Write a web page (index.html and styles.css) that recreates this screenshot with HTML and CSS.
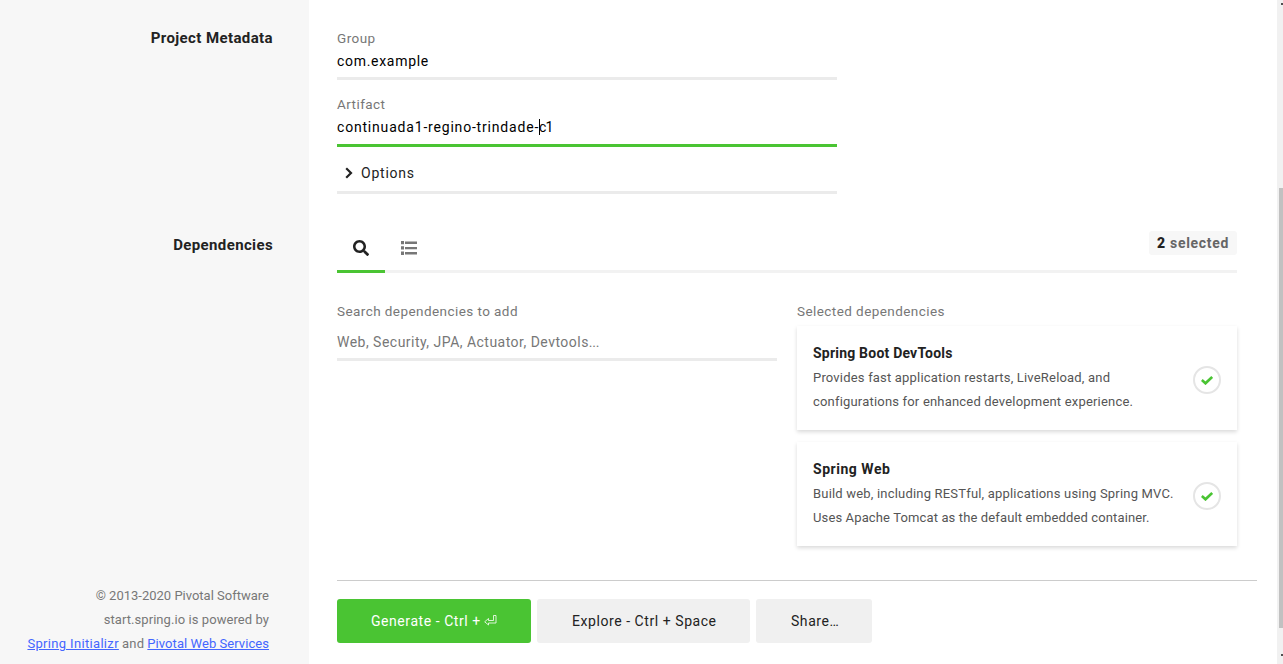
FILE: index.html
```html
<!DOCTYPE html>
<html lang="en">
<head>
<meta charset="utf-8">
<title>Spring Initializr</title>
<link rel="stylesheet" href="styles.css">
</head>
<body>
<div class="app">
  <aside class="sidebar">
    <h2 class="side-label side-meta"><span>Project Metadata</span></h2>
    <h2 class="side-label side-deps"><span>Dependencies</span></h2>
    <footer class="credits">
      <div><span class="credit-copy">© 2013-2020 Pivotal Software</span></div>
      <div><span class="credit-powered">start.spring.io is powered by</span></div>
      <div class="credit-links"><a class="link-init">Spring Initializr</a><span class="credit-and">and</span><a class="link-pws">Pivotal Web Services</a></div>
    </footer>
  </aside>
  <main class="main">
    <section class="metadata">
      <div class="field field-group">
        <span class="label label-group">Group</span>
        <div class="value value-group">com.example</div>
      </div>
      <div class="field field-artifact">
        <span class="label label-artifact">Artifact</span>
        <div class="value"><span class="value-artifact">continuada1-regino-trindade-</span><i class="caret"></i><span class="value-tail">c1</span></div>
      </div>
      <div class="options">
        <svg class="chevron" width="8" height="12" viewBox="0 0 8 12"><path d="M1.2 1.2 6 6 1.2 10.8" fill="none" stroke="currentColor" stroke-width="2.2"/></svg>
        <span>Options</span>
      </div>
    </section>
    <section class="dependencies">
      <nav class="tabs">
        <a class="tab active"><svg width="16" height="16" viewBox="0 0 512 512"><path fill="currentColor" d="M505 442.700 405.300 343c-4.500-4.500-10.600-7-17-7H372c27.600-35.300 44-79.700 44-128C416 93.100 322.900 0 208 0S0 93.100 0 208s93.100 208 208 208c48.300 0 92.700-16.400 128-44v16.300c0 6.400 2.500 12.500 7 17l99.700 99.700c9.400 9.400 24.600 9.400 33.900 0l28.300-28.300c9.400-9.400 9.400-24.600.1-34zM208 336c-70.700 0-128-57.200-128-128 0-70.700 57.200-128 128-128 70.700 0 128 57.200 128 128 0 70.700-57.200 128-128 128z"/></svg></a>
        <a class="tab"><svg width="16" height="14" viewBox="0 0 16 14"><path fill="currentColor" d="M0 0h3v3.300H0zM0 5.300h3v3.300H0zM0 10.600h3v3.300H0zM4 .6h12v2.300H4zM4 5.900h12v2.300H4zM4 11.100h12v2.300H4z"/></svg></a>
        <span class="badge"><strong>2</strong> selected</span>
      </nav>
      <div class="columns">
        <div class="search">
          <span class="label label-search">Search dependencies to add</span>
          <div class="placeholder"><span>Web, Security, JPA, Actuator, Devtools<span class="dots">...</span></span></div>
        </div>
        <div class="selected">
          <span class="label label-selected">Selected dependencies</span>
          <article class="card">
            <div class="card-text">
              <h3 class="t-dev">Spring Boot DevTools</h3>
              <p><span class="d1">Provides fast application restarts, LiveReload, and</span><br><span class="d2">configurations for enhanced development experience.</span></p>
            </div>
            <span class="check"><svg width="12" height="9" viewBox="0 0 12 9"><path d="M.8 4 4.500 7.300 11.200 1" fill="none" stroke="currentColor" stroke-width="2.700"/></svg></span>
          </article>
          <article class="card">
            <div class="card-text">
              <h3 class="t-web">Spring Web</h3>
              <p><span class="d3">Build web, including RESTful, applications using Spring MVC.</span><br><span class="d4">Uses Apache Tomcat as the default embedded container.</span></p>
            </div>
            <span class="check"><svg width="12" height="9" viewBox="0 0 12 9"><path d="M.8 4 4.500 7.300 11.200 1" fill="none" stroke="currentColor" stroke-width="2.700"/></svg></span>
          </article>
        </div>
      </div>
    </section>
    <div class="actions">
      <button class="btn primary"><span>Generate - Ctrl + </span><svg class="enter" width="13" height="11" viewBox="0 0 13 11"><path d="M9.500.5h2.500v7.500H4.500v2L.7 6.800l3.800-3.300v2h5z" fill="none" stroke="currentColor" stroke-width=".8"/></svg></button>
      <button class="btn explore"><span>Explore - Ctrl + Space</span></button>
      <button class="btn share"><span>Share<span class="dots">...</span></span></button>
    </div>
  </main>
  <div class="scrollbar"><i class="arrow"></i><i class="thumb"></i><i class="arrow"></i></div>
</div>
</body>
</html>
```
FILE: styles.css
```css
* { box-sizing: border-box; }
body { margin: 0; font-family: Roboto, "Liberation Sans", sans-serif; font-size: 14px; line-height: 24px; color: #222; background: #fff; }
h2, h3, p { margin: 0; }
.app { display: flex; height: 664px; overflow: hidden; white-space: nowrap; }

.sidebar { width: 309px; background: #f7f7f7; padding: 26px 36px 8px 0; display: flex; flex-direction: column; text-align: right; }
.side-label { font-size: 15px; font-weight: 700; line-height: 24px; letter-spacing: .4px; }
.side-deps { margin-top: 183px; letter-spacing: .37px; }
.credits { margin-top: auto; padding-right: 4px; font-size: 13px; color: #777; }
.credit-powered { letter-spacing: .07px; }
.credit-links { display: flex; justify-content: flex-end; gap: 3px; }
.credits a { color: #4466ff; text-decoration: underline; }
.credits .link-init { letter-spacing: .33px; }
.credit-and { letter-spacing: .3px; }
.credits .link-pws { letter-spacing: .06px; }

.main { flex: 1; padding: 26px 0 0 28px; }
.metadata { width: 500px; }
.label { display: block; font-size: 13.5px; color: #777; line-height: 24px; letter-spacing: .43px; }
.value { display: flex; align-items: center; height: 22px; color: #000; letter-spacing: .7px; }
.value-artifact { letter-spacing: .81px; }
.value-tail { letter-spacing: -.8px; margin-left: -1px; }
.field-group { height: 54px; border-bottom: 3px solid #ebebeb; }
.field-artifact { height: 55px; margin-top: 12px; border-bottom: 3px solid #4ac433; }
.caret { width: 1px; height: 16px; background: #000; }
.options { display: flex; align-items: center; height: 47px; padding: 7px 0 0 8px; gap: 8px; border-bottom: 3px solid #ebebeb; letter-spacing: .78px; }

.dependencies { margin-top: 29px; width: 900px; }
.tabs { display: flex; height: 50px; border-bottom: 3px solid #f2f2f2; }
.tab { width: 48px; height: 50px; display: flex; align-items: center; justify-content: center; color: #777; border-bottom: 3px solid transparent; padding-top: 3px; }
.tab.active { color: #222; border-color: #4ac433; }
.badge { margin: 8px 0 0 auto; width: 88px; height: 24px; border-radius: 3px; background: #f7f7f7; padding-left: 8px; font-weight: 700; color: #666; letter-spacing: .7px; }
.badge strong { color: #222; }
.columns { display: flex; gap: 20px; padding-top: 26px; }
.search, .selected { width: 440px; }
.placeholder { height: 38px; padding-top: 7px; border-bottom: 3px solid #ebebeb; color: #777; letter-spacing: .48px; }
.placeholder .dots { letter-spacing: -.3px; }
.selected { display: flex; flex-direction: column; }
.card { display: flex; align-items: center; justify-content: space-between; height: 104px; margin-top: 3px; padding: 0 16px; background: #fff; box-shadow: 0 2px 4px 0 rgba(0,0,0,.15); }
.card + .card { margin-top: 12px; }
.card h3 { font-size: 14px; line-height: 24px; margin: -1px 0 1px; letter-spacing: .21px; }
.card .t-web { letter-spacing: .53px; }
.card p { font-size: 13px; color: #555; letter-spacing: .19px; }
.d4 { letter-spacing: .13px; }
.check { width: 28px; height: 28px; border: 2px solid #e5e5e5; border-radius: 50%; display: flex; align-items: center; justify-content: center; color: #4ac433; margin-top: 4px; }

.actions { display: flex; gap: 6px; width: 920px; margin-top: 34px; border-top: 1px solid #ccc; padding-top: 18px; }
.btn { display: flex; align-items: center; height: 44px; border: 0; border-radius: 3px; padding: 0 0 0 34px; font: 14px/24px Roboto, "Liberation Sans", sans-serif; background: #f0f0f0; color: #222; white-space: pre; letter-spacing: .56px; }
.primary { width: 194px; background: #4ac433; color: #fff; }
.enter { margin: -2px 0 0 -1px; }
.explore { width: 213px; padding-left: 35px; }
.share { width: 116px; padding-left: 35px; }
.share .dots { letter-spacing: -.8px; }

.scrollbar { width: 6px; height: 664px; background: #f1f1f1; display: flex; flex-direction: column; justify-content: space-between; align-items: flex-end; padding: 3px 0 8px; }
.arrow { width: 2px; height: 2px; background: #505050; }
.thumb { width: 4px; height: 440px; background: #c1c1c1; margin-top: 157px; }
```
